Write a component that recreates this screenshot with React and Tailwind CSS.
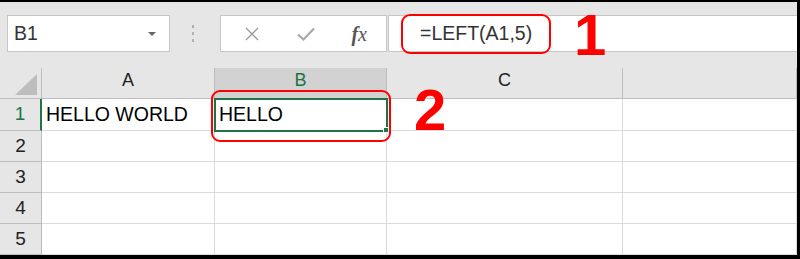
const cols = ['A', 'B', 'C', '']
const rows = [1, 2, 3, 4, 5]
const cells = { A1: 'HELLO WORLD', B1: 'HELLO' }

const App = () => {
  return (
    <div className="relative w-[800px] h-[259px] bg-black pt-[2px] pr-[3px] pb-[4px] overflow-hidden font-['Liberation_Sans',Arial,sans-serif]">
      {/* Formula bar */}
      <div className="flex items-start h-[66px] bg-[#e6e6e6] pt-[13px]">
        <div className="ml-[7px] w-[163px] h-[37px] bg-white border border-[#c6c6c6] flex items-center justify-between pl-[6px] pr-[13px]">
          <span className="text-[19.5px] text-[#333]">B1</span>
          <span className="border-x-[4px] border-x-transparent border-t-[4px] border-t-[#666] mt-[1px]" />
        </div>
        <div className="w-[50px] h-[37px] flex flex-col items-center justify-center gap-[4px] pr-[4px]">
          <span className="w-[2px] h-[3px] bg-[#b0b0b0]" />
          <span className="w-[2px] h-[3px] bg-[#b0b0b0]" />
          <span className="w-[2px] h-[3px] bg-[#b0b0b0]" />
        </div>
        <div className="w-[167px] h-[37px] bg-white border border-[#c6c6c6] flex items-center pl-[4px]">
          <div className="w-[57px] flex justify-center">
            <svg width="16" height="16" viewBox="0 0 16 16" fill="none" stroke="#9a9a9a" strokeWidth="1.3">
              <path d="M2 2L14 14M14 2L2 14" />
            </svg>
          </div>
          <div className="w-[57px] flex justify-center">
            <svg width="20" height="16" viewBox="0 0 20 16" fill="none" stroke="#a8a8a8" strokeWidth="2.2">
              <path d="M2 8.5L7.5 13.5L18 2.5" />
            </svg>
          </div>
          <div className="w-[57px] flex justify-center">
            <span className="font-['Liberation_Serif',serif] italic text-[20px] text-[#555] leading-none">
              <span className="font-bold">f</span>x
            </span>
          </div>
        </div>
        <div className="flex-1 h-[37px] ml-[1px] bg-white border-y border-l border-[#c6c6c6] flex items-center pl-[31px]">
          <span className="text-[19.5px] text-[#333]">=LEFT(A1,5)</span>
        </div>
      </div>

      {/* Sheet */}
      <div className="grid grid-cols-[42px_173px_172px_236px_1fr] grid-rows-[31px_32px_31px_31px_31px_31px] bg-white">
        <div className="bg-[#e6e6e6] border-r border-b border-[#bdbdbd] flex items-end justify-end pr-[4px] pb-[3px]">
          <svg width="22" height="21" viewBox="0 0 22 21">
            <polygon points="22,0 22,21 0,21" fill="#bdbdbd" />
          </svg>
        </div>
        {cols.map((c) => (
          <div
            key={c || 'D'}
            className={`${c === 'B' ? 'bg-[#d2d2d2] text-[#217346]' : 'bg-[#e6e6e6] text-[#222]'} border-r border-b border-[#bdbdbd] flex items-end justify-center pb-[4px] text-[18px]`}
          >
            {c}
          </div>
        ))}
        {rows.map((r) => [
          <div
            key={`h${r}`}
            className={`${r === 1 ? 'text-[#217346] border-r-2 border-r-[#217346]' : 'text-[#222] border-r border-r-[#bdbdbd]'} bg-[#e6e6e6] border-b border-b-[#bdbdbd] flex items-center justify-center text-[19px]`}
          >
            {r}
          </div>,
          ...cols.map((c) => (
            <div
              key={`${c || 'D'}${r}`}
              className="border-r border-b border-[#dadada] flex items-center pl-[4px] text-[19.5px] text-black whitespace-nowrap"
            >
              {cells[`${c}${r}`]}
            </div>
          )),
        ])}
      </div>

      {/* Active cell B1 */}
      <div className="absolute left-[214px] top-[98px] w-[174px] h-[34px] border-2 border-[#217346] pointer-events-none" />
      <div className="absolute left-[383px] top-[127px] w-[6px] h-[6px] bg-[#217346] border border-white" />

      {/* Annotations */}
      <div className="absolute left-[401px] top-[14px] w-[150px] h-[40px] border-2 border-[#ff0000] rounded-[9px]" />
      <div className="absolute left-[211px] top-[90px] w-[180px] h-[52px] border-2 border-[#ff0000] rounded-[9px]" />
      <span className="absolute left-[574px] top-[6px] text-[58px] font-bold leading-none text-[#ff0000]">1</span>
      <span className="absolute left-[414px] top-[81px] text-[58px] font-bold leading-none text-[#ff0000]">2</span>
    </div>
  )
}

export default App
